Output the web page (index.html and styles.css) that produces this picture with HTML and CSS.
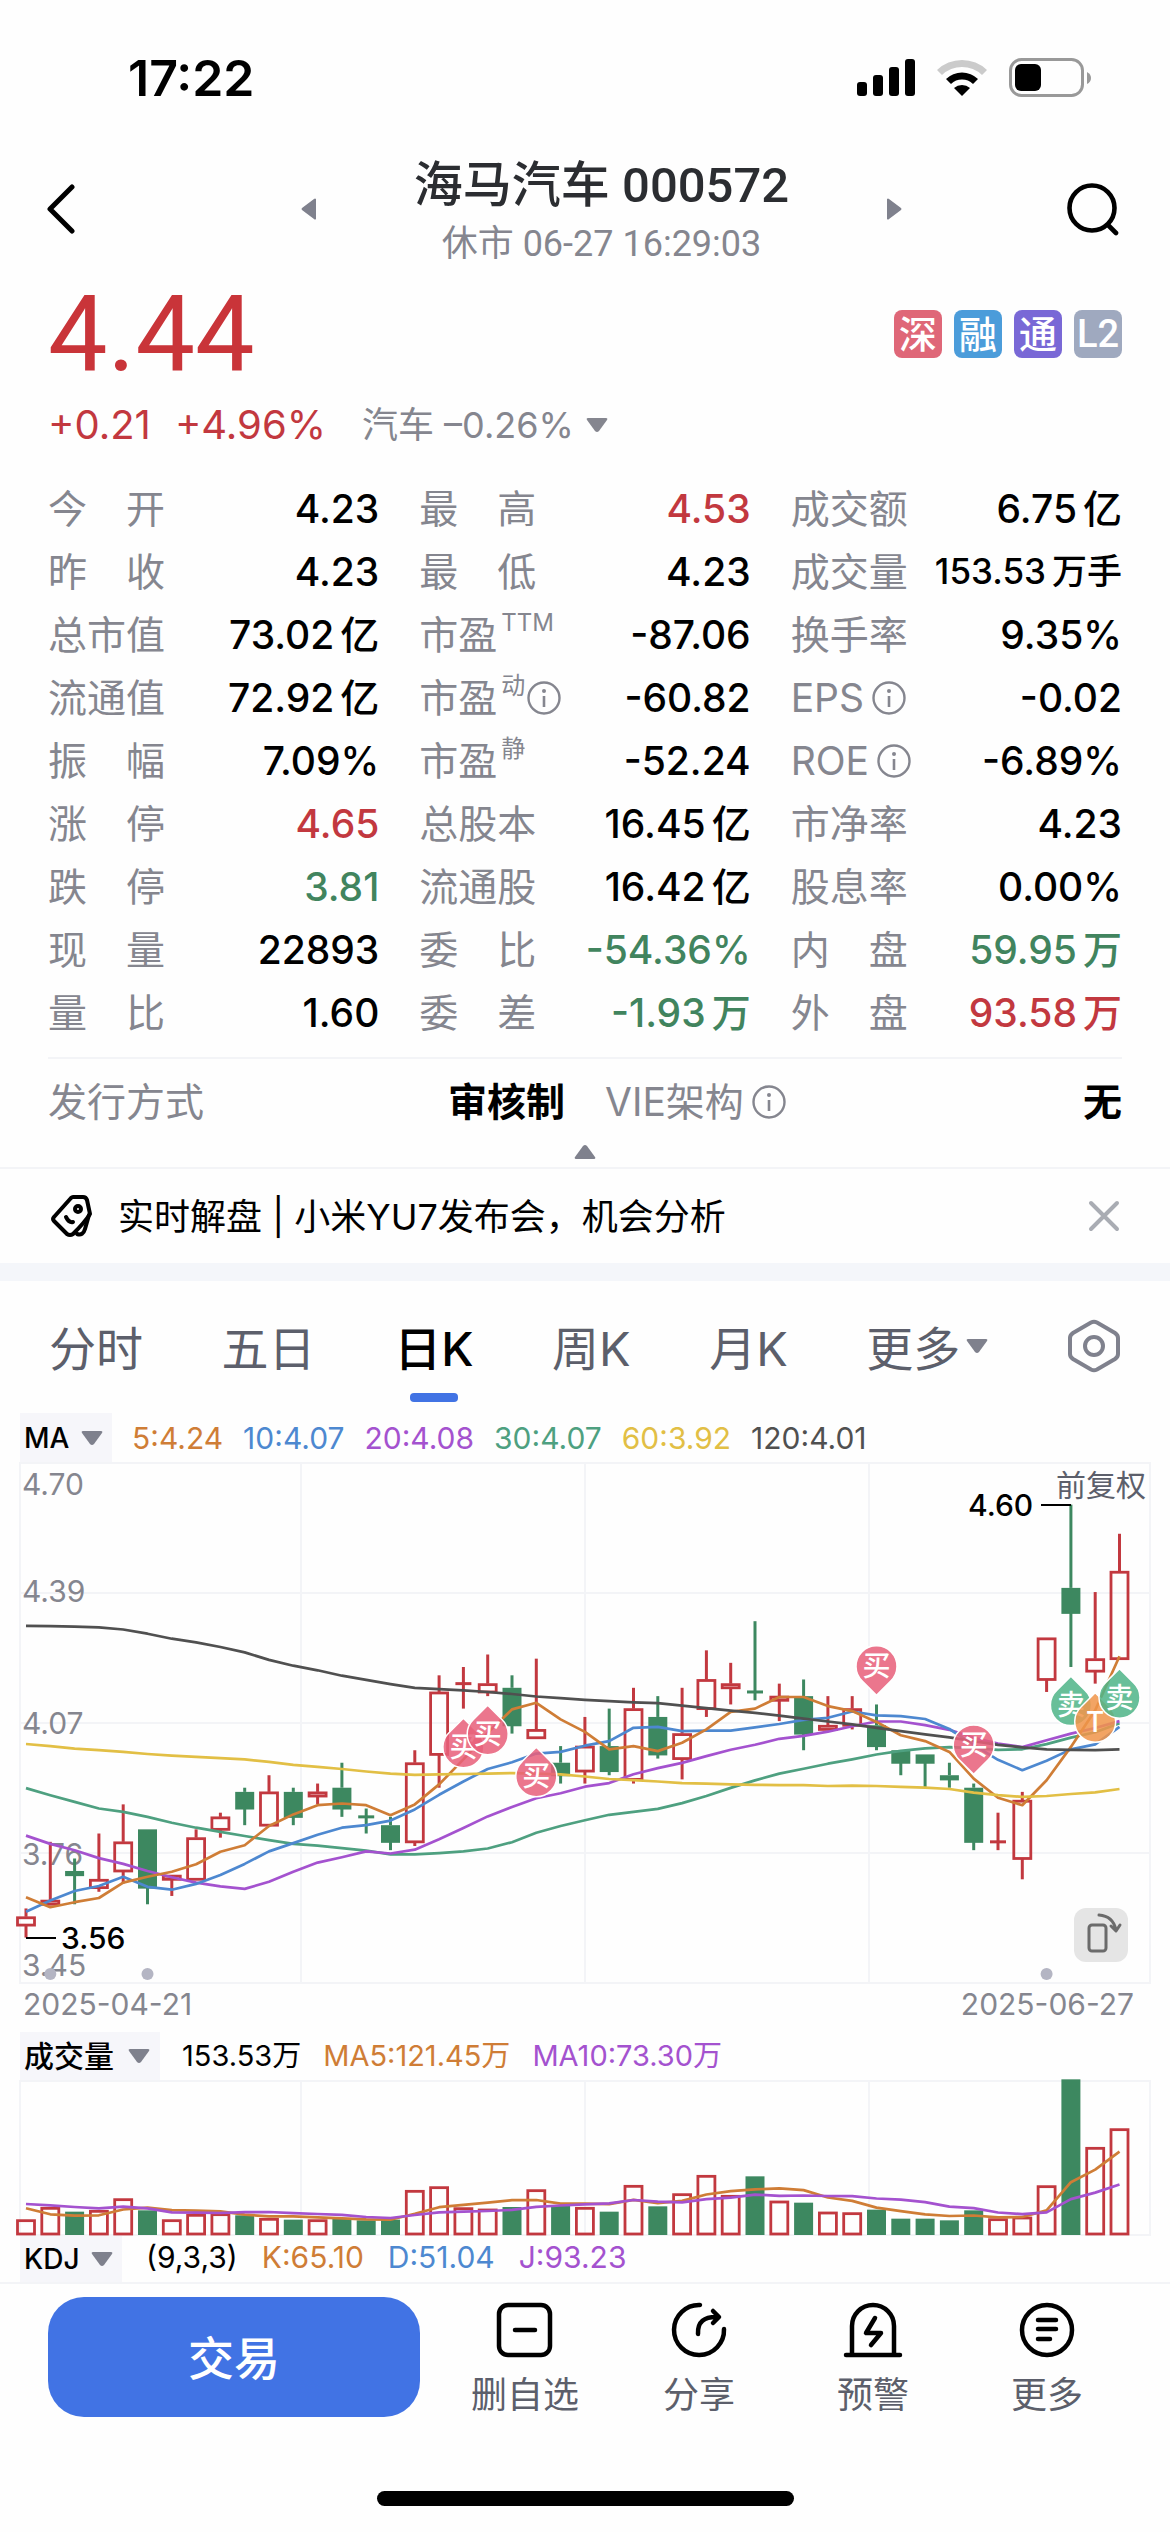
FILE: index.html
```html
<!DOCTYPE html>
<html lang="zh-CN">
<head>
<meta charset="utf-8">
<meta name="viewport" content="width=device-width, initial-scale=1">
<title>海马汽车 000572</title>
<link rel="stylesheet" href="styles.css">
</head>
<body>
<svg class="defs" aria-hidden="true">
  <symbol id="info" viewBox="0 0 34 34">
    <circle cx="17" cy="17" r="15.5" fill="none" stroke="currentColor" stroke-width="2.4"/>
    <path d="M17 15v11" stroke="currentColor" stroke-width="2.6"/>
    <circle cx="17" cy="10" r="2" fill="currentColor"/>
  </symbol>
  <symbol id="down" viewBox="0 0 22 16">
    <path d="M2 1h18q2 0 1 2l-8 11q-2 2-4 0L1 3q-1-2 1-2z" fill="currentColor"/>
  </symbol>
</svg>

<div class="status">
  <span class="clock">17:22</span>
  <div class="status-icons">
    <svg width="58" height="38" viewBox="0 0 58 38">
      <rect x="0" y="23" width="10" height="14" rx="3"/><rect x="16" y="16" width="10" height="21" rx="3"/>
      <rect x="32" y="8" width="10" height="29" rx="3"/><rect x="48" y="0" width="10" height="37" rx="3"/>
    </svg>
    <svg width="50" height="38" viewBox="0 0 50 38">
      <path d="M0 11a36 36 0 0 1 50 0l-5 5a29 29 0 0 0-40 0z" fill="#cbcbcb"/>
      <path d="M9 20a23 23 0 0 1 32 0l-5 5a16 16 0 0 0-22 0z"/>
      <path d="M17 29a12 12 0 0 1 16 0l-8 8z"/>
    </svg>
    <svg width="84" height="40" viewBox="0 0 84 40">
      <rect x="1.5" y="1.5" width="72" height="36" rx="11" fill="none" stroke="#999" stroke-width="3"/>
      <rect x="6" y="6" width="26" height="27" rx="6"/>
      <path d="M78 14q4 2 4 6t-4 6z" fill="#999"/>
    </svg>
  </div>
</div>

<header class="header">
  <button class="icon-btn" aria-label="返回"><svg width="30" height="50" viewBox="0 0 30 50"><path d="M26 3 4 25l22 22" fill="none" stroke="#000" stroke-width="5" stroke-linecap="round" stroke-linejoin="round"/></svg></button>
  <div class="switcher">
    <button class="icon-btn" aria-label="上一只"><svg width="15" height="22" viewBox="0 0 15 22"><path d="M15 1v20q-1 1-2 0L1 12q-1-1 0-2L13 1q1-1 2 0z" fill="#7f818d"/></svg></button>
    <div class="title">
      <h1>海马汽车 000572</h1>
      <p>休市 06-27 16:29:03</p>
    </div>
    <button class="icon-btn" aria-label="下一只"><svg width="15" height="22" viewBox="0 0 15 22"><path d="M0 1v20q1 1 2 0l12-9q1-1 0-2L2 1Q1 0 0 1z" fill="#7f818d"/></svg></button>
  </div>
  <button class="icon-btn" aria-label="搜索"><svg width="54" height="54" viewBox="0 0 54 54"><g fill="none" stroke="#000" stroke-width="4.6" stroke-linecap="round"><circle cx="26" cy="26" r="22.5"/><path d="m42 43 8 8"/></g></svg></button>
</header>

<main>
<section class="quote">
  <div class="price-row">
    <strong class="price">4.44</strong>
    <ul class="badges"><li class="b-sz">深</li><li class="b-rz">融</li><li class="b-tong">通</li><li class="b-l2">L2</li></ul>
  </div>
  <div class="change-row">
    <span>+0.21</span><span>+4.96%</span>
    <button class="sector">汽车 –0.26%<svg width="22" height="16"><use href="#down"/></svg></button>
  </div>
  <dl class="stats">
    <div><dt class="spread">今开</dt><dd>4.23</dd></div>
    <div><dt class="spread">最高</dt><dd class="up">4.53</dd></div>
    <div><dt>成交额</dt><dd>6.75<i>亿</i></dd></div>
    <div><dt class="spread">昨收</dt><dd>4.23</dd></div>
    <div><dt class="spread">最低</dt><dd>4.23</dd></div>
    <div><dt>成交量</dt><dd class="small">153.53<i>万手</i></dd></div>
    <div><dt>总市值</dt><dd>73.02<i>亿</i></dd></div>
    <div><dt>市盈<sup>TTM</sup></dt><dd>-87.06</dd></div>
    <div><dt>换手率</dt><dd>9.35%</dd></div>
    <div><dt>流通值</dt><dd>72.92<i>亿</i></dd></div>
    <div><dt>市盈<sup>动</sup><svg class="info"><use href="#info"/></svg></dt><dd>-60.82</dd></div>
    <div><dt>EPS<svg class="info gap"><use href="#info"/></svg></dt><dd>-0.02</dd></div>
    <div><dt class="spread">振幅</dt><dd>7.09%</dd></div>
    <div><dt>市盈<sup>静</sup></dt><dd>-52.24</dd></div>
    <div><dt>ROE<svg class="info gap"><use href="#info"/></svg></dt><dd>-6.89%</dd></div>
    <div><dt class="spread">涨停</dt><dd class="up">4.65</dd></div>
    <div><dt>总股本</dt><dd>16.45<i>亿</i></dd></div>
    <div><dt>市净率</dt><dd>4.23</dd></div>
    <div><dt class="spread">跌停</dt><dd class="down">3.81</dd></div>
    <div><dt>流通股</dt><dd>16.42<i>亿</i></dd></div>
    <div><dt>股息率</dt><dd>0.00%</dd></div>
    <div><dt class="spread">现量</dt><dd>22893</dd></div>
    <div><dt class="spread">委比</dt><dd class="down">-54.36%</dd></div>
    <div><dt class="spread">内盘</dt><dd class="down">59.95<i>万</i></dd></div>
    <div><dt class="spread">量比</dt><dd>1.60</dd></div>
    <div><dt class="spread">委差</dt><dd class="down">-1.93<i>万</i></dd></div>
    <div><dt class="spread">外盘</dt><dd class="up">93.58<i>万</i></dd></div>
  </dl>
  <dl class="stats issue">
    <div><dt>发行方式</dt><dd>审核制</dd></div>
    <div><dt>VIE架构<svg class="info gap"><use href="#info"/></svg></dt><dd>无</dd></div>
  </dl>
  <button class="collapse" aria-label="收起"><svg width="22" height="14" viewBox="0 0 22 14"><path d="M2 14h18q2 0 1-2L13 1q-2-2-4 0L1 12q-1 2 1 2z" fill="#7f818d"/></svg></button>
</section>

<section class="news">
  <svg width="44" height="46" viewBox="0 0 44 46">
    <g fill="none" stroke="#000" stroke-width="4" stroke-linecap="round" stroke-linejoin="round">
      <path d="M22 5 5 24q-2 2 0 4l13 13q3 2 6 0 12-12 17-20L38 7q-1-3-4-3H24q-1 0-2 1z"/>
      <path d="M40 22 36 36q-2 7-8 5"/><circle cx="29" cy="16" r="3"/><path d="M17 24q3 6 7 5"/>
    </g>
  </svg>
  <a href="#news">实时解盘 | 小米YU7发布会，机会分析</a>
  <button class="icon-btn" aria-label="关闭"><svg width="32" height="32" viewBox="0 0 32 32"><path d="m3 3 26 26M29 3 3 29" stroke="#a9acb3" stroke-width="4" stroke-linecap="round"/></svg></button>
</section>

<nav class="tabs">
  <button>分时</button><button>五日</button><button class="active">日K</button><button>周K</button><button>月K</button>
  <button>更多<svg width="22" height="16"><use href="#down"/></svg></button>
  <button aria-label="设置"><svg width="54" height="54" viewBox="0 0 54 54"><g fill="none" stroke="#7f818d" stroke-width="4"><path d="M24 3.5q3-1.500 6 0l18 10.500q3 2 3 5v16q0 3-3 5L30 50.500q-3 1.500-6 0L6 40q-3-2-3-5V19q0-3 3-5z"/><circle cx="27" cy="27" r="9"/></g></svg></button>
</nav>

<section class="charts">
  <div class="legend">
    <label class="picker"><select aria-label="主图指标"><option>MA</option></select><svg width="22" height="16"><use href="#down"/></svg></label>
    <span class="orange">5:4.24</span><span class="blue">10:4.07</span><span class="purple">20:4.08</span><span class="green">30:4.07</span><span class="yellow">60:3.92</span><span class="grey">120:4.01</span>
  </div>
  <div class="plot">
    <svg id="kline" viewBox="0 0 1170 522" role="img" aria-label="日K线"></svg>
    <button class="rotate" aria-label="横屏"><svg width="54" height="54" viewBox="0 0 54 54"><g fill="none" stroke="#6b6b6b" stroke-width="3" stroke-linecap="round" stroke-linejoin="round"><rect x="15" y="17" width="17" height="26" rx="3"/><path d="M25 7q14 1 17 15m-5-4 5 5 4-6"/></g></svg></button>
  </div>
  <div class="dates"><time>2025-04-21</time><time>2025-06-27</time></div>
  <div class="legend volume">
    <label class="picker"><select aria-label="副图指标一"><option>成交量</option></select><svg width="22" height="16"><use href="#down"/></svg></label>
    <span>153.53万</span><span class="orange">MA5:121.45万</span><span class="purple">MA10:73.30万</span>
  </div>
  <svg id="volume" viewBox="0 0 1170 156" role="img" aria-label="成交量"></svg>
  <div class="legend kdj">
    <label class="picker"><select aria-label="副图指标二"><option>KDJ</option></select><svg width="22" height="16"><use href="#down"/></svg></label>
    <span>(9,3,3)</span><span class="orange">K:65.10</span><span class="blue">D:51.04</span><span class="purple">J:93.23</span>
  </div>
</section>
</main>

<footer class="bar">
  <button class="trade">交易</button>
  <button class="action"><svg width="60" height="56" viewBox="0 0 60 56"><g fill="none" stroke="#000" stroke-width="4.500" stroke-linecap="round"><rect x="4" y="3" width="51" height="50" rx="9"/><path d="M20 28h20"/></g></svg>删自选</button>
  <button class="action"><svg width="60" height="56" viewBox="0 0 60 56"><g fill="none" stroke="#000" stroke-width="4.500" stroke-linecap="round" stroke-linejoin="round"><path d="M31 3a25 25 0 1 0 24 24"/><path d="M29 32q-1-18 20-17M44 9l6 6-6 6"/></g></svg>分享</button>
  <button class="action"><svg width="60" height="56" viewBox="0 0 60 56"><g fill="none" stroke="#000" stroke-width="4.500" stroke-linecap="round" stroke-linejoin="round"><path d="M3 53h54M9 53V24a21 21 0 0 1 42 0v29"/><path d="M32 16 23 31h15L28 43"/></g></svg>预警</button>
  <button class="action"><svg width="60" height="56" viewBox="0 0 60 56"><g fill="none" stroke="#000" stroke-width="4.500" stroke-linecap="round"><circle cx="30" cy="28" r="25"/><path d="M21 18h18M21 27h18M21 37h12"/></g></svg>更多</button>
</footer>
<div class="home"></div>
<script src="chart.js"></script>
</body>
</html>
```
FILE: styles.css
```css
* { box-sizing: border-box; }
body { margin: 0; background: #fefefe; color: #000; font-family: Inter, "Noto Sans CJK SC", sans-serif; font-size: 30px; }
button, select { font: inherit; color: inherit; background: none; border: 0; padding: 0; margin: 0; cursor: pointer; }
h1, p, ul, dl, dd { margin: 0; padding: 0; }
svg { display: block; flex: none; }
a { color: inherit; text-decoration: none; }
.defs { position: absolute; width: 0; height: 0; }

.status { display: flex; align-items: center; justify-content: space-between; height: 151px; padding: 5px 77px 0 128px; }
.clock { font-size: 50px; font-weight: 600; }
.status-icons { display: flex; align-items: center; gap: 22px; }

.header { display: flex; align-items: center; padding: 0 50px 0 46px; }
.switcher { flex: 1; display: flex; align-items: center; justify-content: space-between; padding: 0 164px 0 225px; }
.title { text-align: center; font-family: Roboto, "Noto Sans CJK SC", sans-serif; white-space: nowrap; }
.title h1 { font-size: 49px; line-height: 70px; font-weight: 500; color: #2b2d31; }
.title p { font-size: 36px; line-height: 46px; color: #85868f; }

.quote { padding: 0 48px 8px; border-bottom: 2px solid #f3f4f7; }
.price-row { display: flex; align-items: center; justify-content: space-between; }
.price { font: 400 106px/134px Roboto, sans-serif; color: #c93439; }
.badges { display: flex; gap: 12px; list-style: none; }
.badges li { width: 48px; height: 48px; border-radius: 8px; color: #fff; font-size: 38px; line-height: 48px; font-weight: 500; text-align: center; }
.b-sz { background: #df6778; }
.b-rz { background: #4b9cda; }
.b-tong { background: #7968d6; }
.badges .b-l2 { background: #9fa9bf; font-family: Roboto, sans-serif; }
.change-row { display: flex; gap: 24px; font-size: 40px; line-height: 48px; color: #c2383f; }
.sector { display: flex; align-items: center; gap: 12px; margin-left: 12px; font-size: 36px; line-height: 48px; color: #85868f; }

.stats { display: grid; grid-template-columns: repeat(3, 1fr); column-gap: 40px; margin-top: 28px; font-size: 39px; line-height: 63px; white-space: nowrap; }
.stats div { display: flex; justify-content: space-between; height: 63px; }
.stats dt { display: flex; align-items: center; color: #85868f; font-weight: 400; }
.stats .spread { display: block; width: 117px; text-align-last: justify; }
.stats sup { font-size: 24px; line-height: 30px; align-self: flex-start; margin-left: 4px; padding-top: 5px; }
.stats dd { font-weight: 500; }
.stats dd i { font-style: normal; margin-left: 6px; }
.stats .small { font-size: 35px; }
.stats .up { color: #c2383f; }
.stats .down { color: #41845e; }
.info { width: 34px; height: 34px; margin-left: 2px; }
.info.gap { margin-left: 8px; }
.issue { grid-template-columns: repeat(2, 1fr); margin-top: 13px; border-top: 2px solid #f3f4f7; line-height: 86px; }
.issue div { height: 86px; }
.issue dd { font-weight: 600; }
.collapse { display: block; margin: 0 auto; }

.news { display: flex; align-items: center; gap: 25px; height: 112px; padding: 0 50px 0 49px; font-size: 36px; border-bottom: 18px solid #f4f6fa; }
.news a { flex: 1; padding-bottom: 4px; }

.tabs { display: flex; align-items: center; justify-content: space-between; height: 132px; padding: 0 49px; }
.tabs button { position: relative; display: flex; align-items: center; gap: 6px; height: 132px; padding-bottom: 3px; font-size: 47px; color: #5c5f6b; }
.tabs svg { color: #7f818d; }
.tabs .active { color: #000; font-weight: 500; }
.tabs .active::after { content: ""; position: absolute; left: 50%; bottom: 11px; width: 48px; height: 9px; margin-left: -24px; border-radius: 4px; background: #4173e4; }

.legend { display: flex; align-items: center; gap: 20px; height: 49px; padding-left: 20px; white-space: nowrap; }
.picker { display: flex; align-items: center; gap: 11px; align-self: stretch; padding: 0 9px 0 4px; background: #f6f6fa; font-size: 28px; font-weight: 500; color: #7f818d; }
.picker select { appearance: none; color: #000; }
.volume { height: 48px; gap: 22px; font-size: 29px; }
.volume .picker { gap: 14px; padding-right: 10px; }
.volume select { font-size: 30px; }
.volume span { padding-bottom: 6px; }
.kdj { height: 46px; gap: 24px; }
.kdj span { padding-bottom: 4px; }
.orange { color: #cf7d36; }
.blue { color: #4d88d0; }
.purple { color: #a452cf; }
.green { color: #4ea080; }
.yellow { color: #e2bf45; }
.grey { color: #505050; }

.plot { position: relative; }
.plot > svg, #volume { width: 100%; height: auto; overflow: visible; }
.rotate { position: absolute; right: 42px; bottom: 22px; border-radius: 12px; background: #e5e5e5; }
.dates { display: flex; justify-content: space-between; padding: 0 36px 7px 23px; line-height: 41px; color: #85868f; }
.axis { font-size: 30px; fill: #85868f; }
.mark { font-size: 30px; font-weight: 500; fill: #000; }
.adjust { font-size: 30px; fill: #5c5f6b; }
.pin { font-size: 28px; fill: #fff; font-weight: 500; text-anchor: middle; }

.bar { display: grid; grid-template-columns: 390fr 174fr 174fr 174fr 174fr; align-items: start; padding: 13px 36px 0 48px; border-top: 2px solid #f3f4f7; }
.trade { height: 120px; margin-right: 18px; padding-bottom: 4px; border-radius: 36px; background: #4173e4; color: #fff; font-size: 46px; font-weight: 500; }
.action { display: flex; flex-direction: column; align-items: center; gap: 11px; padding-top: 5px; font-size: 36px; line-height: 52px; color: #5c5f6b; white-space: nowrap; }
.home { width: 417px; height: 15px; margin: 70px auto 24px; border-radius: 8px; background: #000; }
```
FILE: chart.js
```javascript
// Daily bars: [direction, body top, body bottom, high, low, volume]; prices in cents.
const bars = [
  ['u',361,359,363,356,46],['u',365,364,379,364,83],['d',372,371,375,364,70],['u',370,368,381,367,74],
  ['u',379,372,388,369,109],['d',382,368,382,364,74],['u',371,370,371,366,46],['u',380,370,382,370,62],
  ['u',385,382,386,380,64],['d',391,387,392,383,59],['u',391,383,395,383,50],['d',391,385,392,383,46],
  ['u',391,390,393,388,46],['d',392,387,398,385,48],['d',385,385,387,381,44],['d',383,379,385,377,46],
  ['u',398,379,401,378,134],['u',415,400,419,392,145],['u',417,417,421,411,82],['u',417,415,424,414,78],
  ['d',416,407,419,405,84],['u',406,404,423,404,136],['d',398,395,402,393,89],['u',402,396,409,393,83],
  ['d',402,396,411,395,70],['u',411,394,416,393,149],['d',409,400,414,399,86],['u',405,399,416,394,124],
  ['u',418,411,425,409,179],['u',417,416,422,412,119],['d',415,415,432,413,176],['u',414,413,417,408,102],
  ['d',414,405,418,401,97],['u',407,406,414,406,69],['u',411,407,414,406,67],['d',407,402,412,401,76],
  ['d',401,398,401,395,49],['d',400,398,400,392,49],['d',395,394,398,392,44],['d',392,379,393,377,74],
  ['u',379,379,386,377,49],['u',389,375,391,370,54],['u',428,418,428,415,148],['d',440,434,460,421,467],
  ['u',423,420,439,417,263],['u',444,423,453,423,319]
];
const RED = '#c2383f', GREEN = '#3d8860';
const px = i => 26 + i * 24.3;
const py = c => 1 + (470 - c) * 4.163;
const closes = bars.map(b => b[0] === 'u' ? b[1] : b[2]);
const volumes = bars.map(b => b[5]);

// Moving average whose first values come from bars before the visible range.
const average = (values, n, seed) => values.map((v, i) =>
  i < n - 1 ? seed[i] : values.slice(i - n + 1, i + 1).reduce((a, b) => a + b) / n);
const line = (values, color, y) =>
  `<polyline fill="none" stroke="${color}" stroke-width="2.7" stroke-linejoin="round" points="${values.map((v, i) => px(i).toFixed(1) + ',' + y(v).toFixed(1)).join(' ')}"/>`;

const ma60 = [402.5,402,401.4,401,400.6,400.1,399.7,399.4,399.1,398.8,398.2,397.5,397,396.5,395.9,395.4,395.1,395.2,395.3,395.4,395.5,395.4,395.2,394.7,394.1,393.8,393.5,393.1,393,392.8,392.7,392.6,392.6,392.4,392.5,392.4,392.2,392,391.7,390.8,390.2,389.8,390,390.5,390.9,391.7];
const ma120 = [430.9,430.8,430.7,430.5,430,429,427.8,426.9,425.8,424.5,422.7,421.3,420.2,418.9,417.9,416.9,416,415.7,415.4,415,414.5,413.9,413.5,413.1,412.8,412.5,412.3,411.7,411.1,410.5,410,409.3,408.6,407.9,407.2,406.4,405.6,404.8,404.1,403.2,402.3,401.7,401.2,401.1,401,401.2];
const seed5 = [365.7,363.3,364.5,365.5];
const seed10 = [362.2,364.9,367.2,368.4,370.6,368.2,367.5,368.9,371];
const seed20 = [380.5,378.5,377,375.1,373.7,372,370.5,369.2,368.3,367.7,369.4,371.8,374,375.3,376.7,376.2,377.1,379.6,382.3];
const seed30 = [391.9,390.2,388.6,387,386.2,385,383.6,382.4,381.4,380.4,379.4,378.5,378.1,377.5,376.9,376,376,376.3,376.7,377.4,378.9,381.2,382.8,384.2,385.5,386.2,386.9,388.3,390];

const grid = (h, rows) => {
  let d = `M20 1H1150V${h}H20z`;
  [301, 585, 869].forEach(x => d += `M${x} 1V${h}`);
  for (let r = 1; r < rows; r++) d += `M20 ${1 + r * (h - 1) / rows}H1150`;
  return `<path d="${d}" fill="none" stroke="#f3f4f7" stroke-width="2"/>`;
};

function candle(b, i) {
  const x = px(i), [dir, top, bottom, high, low] = b, c = dir === 'u' ? RED : GREEN;
  const y1 = py(top), y2 = py(bottom), wick = (a, z) => z > a ? `<path d="M${x} ${a}V${z}" stroke="${c}" stroke-width="3"/>` : '';
  if (top === bottom) return wick(py(high), py(low)) + `<path d="M${x - 8} ${y1}h16" stroke="${c}" stroke-width="3"/>`;
  const body = dir === 'u'
    ? `<rect x="${x - 8.5}" y="${y1 + 1}" width="17" height="${Math.max(y2 - y1 - 1, 2)}" fill="none" stroke="${c}" stroke-width="2.8"/>`
    : `<rect x="${x - 9.5}" y="${y1}" width="19" height="${y2 - y1 + 1}" fill="${c}"/>`;
  return wick(py(high), y1) + body + wick(y2, py(low));
}

function pin(i, tip, text, color, side) {
  const x = px(i), y = py(tip), s = side === 'up' ? 1 : -1;
  return `<path d="M${x} ${y}l14 ${14 * s}a20.5 20.5 0 1 ${s > 0 ? 1 : 0} -28 0z" fill="${color}" fill-opacity=".86" stroke="#fff" stroke-width="1.500" stroke-linejoin="round"/>` +
    `<text class="pin" x="${x}" y="${y + 29 * s + 10}">${text}</text>`;
}

document.getElementById('kline').innerHTML =
  grid(521, 4) +
  [['4.70', 33], ['4.39', 140], ['4.07', 272], ['3.76', 403], ['3.45', 514]].map(([t, y]) => `<text class="axis" x="22" y="${y}">${t}</text>`).join('') +
  '<text class="adjust" x="1056" y="34">前复权</text>' +
  bars.map(candle).join('') +
  line(average(closes, 30, seed30), '#4ea080', py) +
  line(average(closes, 20, seed20), '#a452cf', py) +
  line(average(closes, 10, seed10), '#4d88d0', py) +
  line(average(closes, 5, seed5), '#cf7d36', py) +
  line(ma60, '#e2bf45', py) + line(ma120, '#505050', py) +
  [1, 5, 42].map(i => `<circle cx="${px(i)}" cy="512" r="6" fill="#b4b5c3"/>`).join('') +
  '<path d="M26 476h30M1041 43h30" stroke="#000" stroke-width="2"/>' +
  '<text class="mark" x="61" y="487">3.56</text><text class="mark" x="968" y="54">4.60</text>' +
  pin(18, 408.7, '买', '#e8607a', 'up') + pin(19, 411.8, '买', '#e8607a', 'up') + pin(21, 401.7, '买', '#e8607a', 'up') +
  pin(35, 414.2, '买', '#e8607a', 'down') + pin(39, 395.2, '买', '#e8607a', 'down') +
  pin(43, 418.8, '卖', '#4fb588', 'up') + pin(44, 414.8, 'T', '#f0954a', 'up') + pin(45, 420.6, '卖', '#4fb588', 'up');

const vy = v => 155 - v / 3;
document.getElementById('volume').innerHTML =
  grid(155, 1) +
  bars.map((b, i) => {
    const y = vy(b[5]), x = px(i);
    return b[0] === 'u'
      ? `<rect x="${x - 8.5}" y="${y + 1}" width="17" height="${153 - y}" fill="none" stroke="${RED}" stroke-width="2.8"/>`
      : `<rect x="${x - 9.5}" y="${y}" width="19" height="${155 - y}" fill="${GREEN}"/>`;
  }).join('') +
  line(average(volumes, 5, [80,62,58,59]), '#cf7d36', vy) +
  line(average(volumes, 10, [93,89,84,80,85,80,68,67,66]), '#a452cf', vy);
```
